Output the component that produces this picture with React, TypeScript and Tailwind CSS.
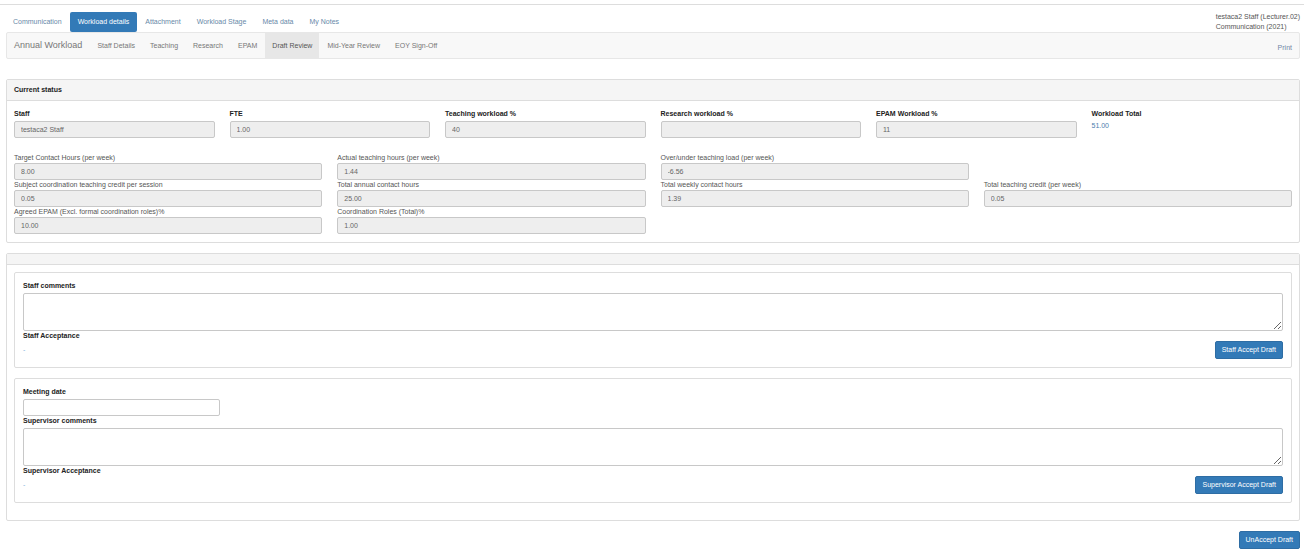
import React, { useId } from "react";

const tabs = ["Communication", "Workload details", "Attachment", "Workload Stage", "Meta data", "My Notes"];

const sections = [
  "Staff Details",
  "Teaching",
  "Research",
  "EPAM",
  "Draft Review",
  "Mid-Year Review",
  "EOY Sign-Off",
];

const summary = [
  { label: "Staff", value: "testaca2 Staff" },
  { label: "FTE", value: "1.00" },
  { label: "Teaching workload %", value: "40" },
  { label: "Research workload %", value: "" },
  { label: "EPAM Workload %", value: "11" },
];

const hours = [
  [
    { label: "Target Contact Hours (per week)", value: "8.00" },
    { label: "Actual teaching hours (per week)", value: "1.44" },
    { label: "Over/under teaching load (per week)", value: "-6.56" },
  ],
  [
    { label: "Subject coordination teaching credit per session", value: "0.05" },
    { label: "Total annual contact hours", value: "25.00" },
    { label: "Total weekly contact hours", value: "1.39" },
    { label: "Total teaching credit (per week)", value: "0.05" },
  ],
  [
    { label: "Agreed EPAM (Excl. formal coordination roles)%", value: "10.00" },
    { label: "Coordination Roles (Total)%", value: "1.00" },
  ],
];

function ReadOnlyField({ label, value, strong }: { label: string; value: string; strong?: boolean }) {
  const id = useId();
  return (
    <div className="flex min-w-0 flex-col">
      <label htmlFor={id} className={strong ? "mb-0.5 font-bold text-[#222]" : "text-[#555]"}>
        {label}
      </label>
      <input
        id={id}
        readOnly
        value={value}
        className="h-[17px] w-full rounded-xs border border-[#c8c8c8] bg-[#eee] px-1.5 text-[#666] outline-none"
      />
    </div>
  );
}

function CommentBox({ label }: { label: string }) {
  const id = useId();
  return (
    <div className="flex flex-col">
      <label htmlFor={id} className="mb-0.5 font-bold text-[#222]">
        {label}
      </label>
      <textarea
        id={id}
        className="block h-[38px] w-full resize-y rounded-xs border border-[#c8c8c8] bg-white px-1.5 py-1 outline-none"
      />
    </div>
  );
}

function PrimaryButton({ children }: { children: React.ReactNode }) {
  return (
    <button
      type="button"
      className="h-[18px] rounded-xs border border-[#2e6da4] bg-[#337ab7] px-1.5 whitespace-nowrap text-white"
    >
      {children}
    </button>
  );
}

function Acceptance({ label, action }: { label: string; action: string }) {
  return (
    <div>
      <div className="font-bold text-[#222]">{label}</div>
      <div className="flex items-start justify-between">
        <span className="pt-1 text-[#7fb2dc]">-</span>
        <PrimaryButton>{action}</PrimaryButton>
      </div>
    </div>
  );
}

export default function App() {
  const dateId = useId();
  return (
    <div className="bg-white pt-1 font-['Liberation_Sans',Arial,sans-serif] text-[7px] leading-[10px] text-[#555]">
      <header className="flex items-start justify-between border-t border-[#ddd] pt-[7px] pl-[5px]">
        <nav className="flex">
          {tabs.map((tab) => (
            <a
              key={tab}
              href="#"
              className={
                tab === "Workload details"
                  ? "rounded-xs bg-[#337ab7] px-2 py-[5px] text-white"
                  : "px-2 py-[5px] text-[#6889a8]"
              }
            >
              {tab}
            </a>
          ))}
        </nav>
        <div className="pr-1">
          <div>testaca2 Staff (Lecturer.02)</div>
          <div>Communication (2021)</div>
        </div>
      </header>

      <main className="px-1.5 pr-1 pb-[7px]">
        <nav className="flex items-stretch gap-px rounded-xs border border-[#e7e7e7] bg-[#f8f8f8] text-[#777]">
          <span className="px-[7px] py-[7px] text-[9px] leading-[11px]">Annual Workload</span>
          {sections.map((section) => (
            <a
              key={section}
              href="#"
              className={
                section === "Draft Review"
                  ? "bg-[#e7e7e7] px-[7px] pt-2 text-[#555]"
                  : "px-[7px] pt-2"
              }
            >
              {section}
            </a>
          ))}
          <a href="#" className="ml-auto px-[7px] pt-2.5 text-[#7287a6]">
            Print
          </a>
        </nav>

        <section className="mt-5 rounded-xs border border-[#ddd]">
          <h2 className="border-b border-[#ddd] bg-[#f5f5f5] px-[7px] py-[5px] font-bold text-[#222]">
            Current status
          </h2>
          <div className="px-[7px] py-2">
            <div className="grid grid-cols-6 gap-x-[15px]">
              {summary.map((field) => (
                <ReadOnlyField key={field.label} {...field} strong />
              ))}
              <div>
                <div className="mb-0.5 font-bold text-[#222]">Workload Total</div>
                <div className="text-[#4a7eae]">51.00</div>
              </div>
            </div>
            <div className="mt-[15px]">
              {hours.map((row) => (
                <div key={row[0].label} className="grid grid-cols-4 gap-x-[15px]">
                  {row.map((field) => (
                    <ReadOnlyField key={field.label} {...field} />
                  ))}
                </div>
              ))}
            </div>
          </div>
        </section>

        <section className="mt-2.5 rounded-xs border border-[#ddd]">
          <div className="h-[11px] border-b border-[#ddd] bg-[#f5f5f5]" />
          <div className="flex flex-col gap-2.5 px-[7px] pt-[7px] pb-[17px]">
            <div className="rounded-xs border border-[#ddd] p-2">
              <CommentBox label="Staff comments" />
              <Acceptance label="Staff Acceptance" action="Staff Accept Draft" />
            </div>
            <div className="rounded-xs border border-[#ddd] p-2">
              <label htmlFor={dateId} className="mb-0.5 block font-bold text-[#222]">
                Meeting date
              </label>
              <input
                id={dateId}
                type="text"
                className="block h-[17px] w-[197px] rounded-xs border border-[#c8c8c8] bg-white px-1.5 outline-none"
              />
              <CommentBox label="Supervisor comments" />
              <Acceptance label="Supervisor Acceptance" action="Supervisor Accept Draft" />
            </div>
          </div>
        </section>

        <div className="mt-2.5 flex justify-end">
          <PrimaryButton>UnAccept Draft</PrimaryButton>
        </div>
      </main>
    </div>
  );
}
